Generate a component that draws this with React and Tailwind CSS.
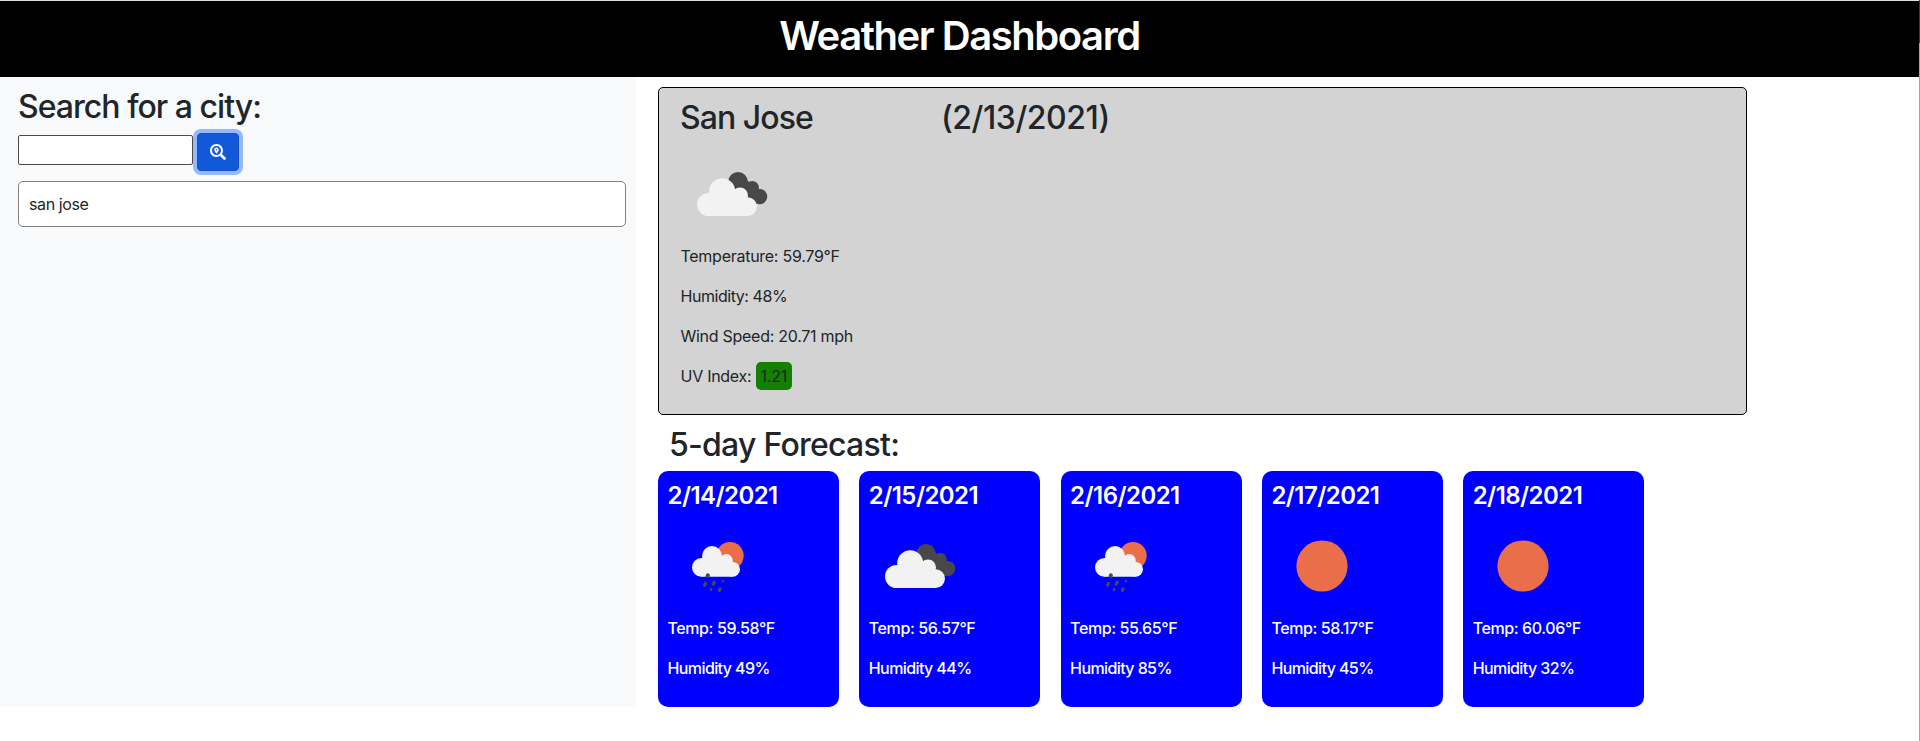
import { FaSearchLocation } from "react-icons/fa";

const forecast = [
  { date: "2/14/2021", icon: "rain", temp: "59.58", humidity: 49 },
  { date: "2/15/2021", icon: "clouds", temp: "56.57", humidity: 44 },
  { date: "2/16/2021", icon: "rain", temp: "55.65", humidity: 85 },
  { date: "2/17/2021", icon: "sun", temp: "58.17", humidity: 45 },
  { date: "2/18/2021", icon: "sun", temp: "60.06", humidity: 32 },
];

function Clouds() {
  return (
    <>
      <g fill="#48484a">
        <circle cx="57" cy="37.7" r="9.7" />
        <circle cx="71.3" cy="43.7" r="6.7" />
        <circle cx="78.7" cy="52.6" r="7.6" />
        <path d="M55 44 L66 36 L80 50 L76 60 L66 58 Z" />
      </g>
      <g fill="#f2f2f2">
        <circle cx="27.5" cy="60.5" r="11.5" />
        <circle cx="41.2" cy="47.2" r="13" />
        <circle cx="59" cy="51.5" r="8" />
        <circle cx="66.6" cy="62.6" r="9.4" />
        <path d="M27.5 72 L28 49 L54 47 L66 55 L66.6 72 Z" />
      </g>
    </>
  );
}

function Rain() {
  return (
    <>
      <circle cx="62" cy="39.7" r="13.7" fill="#eb6e4b" />
      <g fill="#f2f2f2">
        <circle cx="33.3" cy="51.4" r="9.3" />
        <circle cx="44" cy="40" r="10" />
        <circle cx="58.3" cy="44.5" r="6.5" />
        <circle cx="64.6" cy="53.3" r="7.4" />
        <path d="M33.3 60.7 L34 42 L53 40 L64 47 L64.6 60.7 Z" />
      </g>
      <g stroke="#48484a" strokeLinecap="round">
        <path d="M39.9 59.3 L39.6 60" strokeWidth="4" />
        <path d="M37.5 67.5 L36.6 69.2" strokeWidth="3.2" />
        <path d="M46.2 66.4 L45.3 68" strokeWidth="3.4" />
        <path d="M55.1 64.9 L54.9 65.3" strokeWidth="2.4" />
        <path d="M43.2 73.4 L43 73.8" strokeWidth="2.6" />
        <path d="M52.2 72.9 L51.3 74.4" strokeWidth="3.2" />
      </g>
    </>
  );
}

function WeatherIcon({ kind }) {
  return (
    <svg viewBox="0 0 100 100" className="ml-px block size-[100px]">
      {kind === "clouds" && <Clouds />}
      {kind === "rain" && <Rain />}
      {kind === "sun" && <circle cx="50" cy="50" r="25.6" fill="#eb6e4b" />}
    </svg>
  );
}

function DayCard({ day }) {
  return (
    <div className="h-[236px] w-[181px] rounded-[10px] bg-[#0000ff] px-[9px] pt-[10px] text-white">
      <h4 className="mb-[6px] pl-[0.5px] text-2xl leading-[29px] font-[600] tracking-[-0.55px]">{day.date}</h4>
      <WeatherIcon kind={day.icon} />
      <p className="mb-4 pl-[0.5px] font-[450] tracking-[-0.4px]">Temp: {day.temp}°F</p>
      <p className="pl-[0.5px] font-[450] tracking-[-0.6px]">Humidity {day.humidity}%</p>
    </div>
  );
}

export default function App() {
  return (
    <div className="flex h-[741px] w-full overflow-hidden bg-white font-['Inter',sans-serif] text-base leading-6 text-[#212529]">
      <div className="flex-1 border-t border-[#dde0e2]">
        <header className="h-[76px] bg-black pt-[11px] text-center">
          <h1 className="text-[40px] leading-[48px] font-[570] tracking-[-1.45px] text-white">Weather Dashboard</h1>
        </header>
        <main className="flex">
          <aside className="h-[630px] w-[636px] bg-[#f8f9fa] pt-[11px] pr-[10px] pl-[18px]">
            <h2 className="text-[32px] leading-[38px] font-[550] tracking-[-0.97px]">Search for a city:</h2>
            <div className="mt-[7px] flex h-[38px] items-center gap-1">
              <input className="mb-[4px] h-[30px] w-[175px] rounded-[2px] border border-[#4a4a4a] bg-white px-1 outline-none" />
              <button className="flex h-[38px] w-[42px] items-center justify-center rounded-[4px] border border-[#1152c9] bg-[#1259d9] text-white ring-4 ring-[#94bafb]">
                <FaSearchLocation className="size-4" />
              </button>
            </div>
            <div className="mt-[10px] h-[46px] rounded-[5px] border border-[#808080] bg-white px-[10px] py-[10px] tracking-[-0.4px]">
              san jose
            </div>
          </aside>
          <section className="pt-[10px] pl-[22px]">
            <div className="h-[328px] w-[1089px] rounded-[5px] border border-black bg-[#d3d3d3] px-[21px] pt-[11px]">
              <div className="mb-[7px] flex h-[38px] text-[32px] leading-[38px] font-[550]">
                <h2 className="w-[261px] tracking-[-0.95px]">San Jose</h2>
                <h2 className="tracking-[-0.45px]">(2/13/2021)</h2>
              </div>
              <WeatherIcon kind="clouds" />
              <div className="flex flex-col gap-4 pl-[0.5px] tracking-[-0.27px]">
                <p>Temperature: 59.79°F</p>
                <p className="tracking-[-0.45px]">Humidity: 48%</p>
                <p>Wind Speed: 20.71 mph</p>
                <p>
                  UV Index: <span className="rounded-[5px] bg-[#148000] px-[5px] py-[4px]">1.21</span>
                </p>
              </div>
            </div>
            <h2 className="mt-[11px] mb-[7px] ml-[11px] text-[32px] leading-[38px] font-[550] tracking-[-0.75px]">5-day Forecast:</h2>
            <div className="flex gap-[20.3px]">
              {forecast.map((day) => (
                <DayCard key={day.date} day={day} />
              ))}
            </div>
          </section>
        </main>
      </div>
      <div className="w-px bg-[#a6a6a6]">
        <div className="h-[43px] bg-[#3a3a3a]" />
      </div>
    </div>
  );
}
